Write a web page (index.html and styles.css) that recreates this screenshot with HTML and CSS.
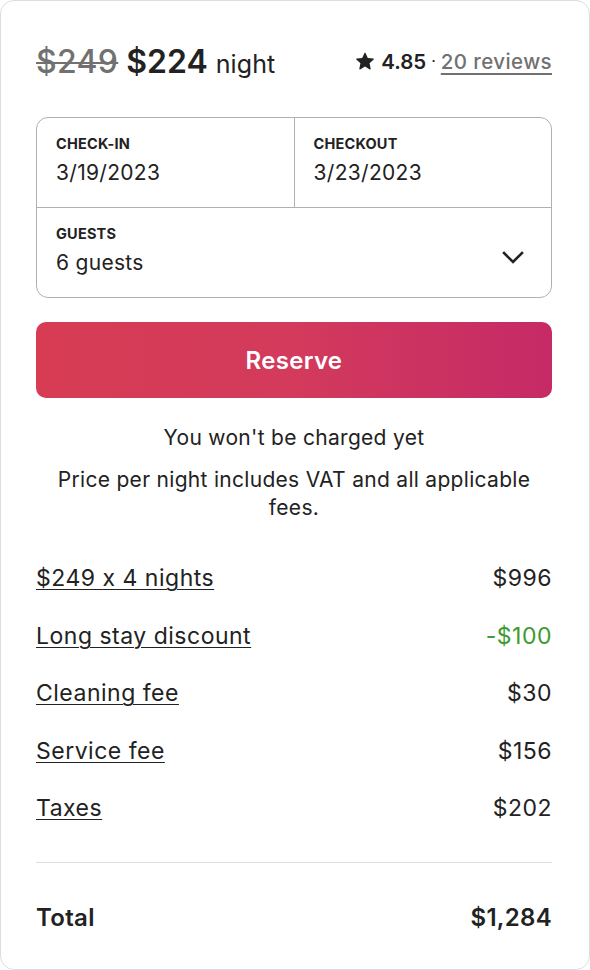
FILE: index.html
```html
<!DOCTYPE html>
<html lang="en">
<head>
<meta charset="utf-8">
<title>Reserve</title>
<link rel="stylesheet" href="styles.css">
</head>
<body>
<div class="card">
  <div class="header">
    <div class="price">
      <span class="old">$249</span>
      <span class="now">$224</span>
      <span class="unit">night</span>
    </div>
    <div class="rating">
      <svg class="star" viewBox="0 0 32 32" width="18" height="18"><path d="M15.1 1.58l-4.13 8.88-9.86 1.27a1 1 0 0 0-.54 1.74l7.3 6.570-1.97 9.85a1 1 0 0 0 1.48 1.06l8.62-5 8.63 5a1 1 0 0 0 1.48-1.06l-1.97-9.85 7.3-6.57a1 1 0 0 0-.55-1.73l-9.86-1.28-4.12-8.88a1 1 0 0 0-1.82 0z" fill="#222"/></svg>
      <span class="score">4.85</span>
      <span class="dot">·</span>
      <span class="reviews">20 reviews</span>
    </div>
  </div>

  <div class="picker">
    <div class="dates">
      <div class="cell">
        <div class="label">CHECK-IN</div>
        <div class="value">3/19/2023</div>
      </div>
      <div class="cell cell-right">
        <div class="label">CHECKOUT</div>
        <div class="value">3/23/2023</div>
      </div>
    </div>
    <div class="guests">
      <div class="cell">
        <div class="label">GUESTS</div>
        <div class="value">6 guests</div>
      </div>
      <svg class="chevron" viewBox="0 0 22 13" width="22" height="13"><path d="M2 2l9 9 9-9" fill="none" stroke="#222" stroke-width="2.6" stroke-linecap="square"/></svg>
    </div>
  </div>

  <div class="reserve">Reserve</div>

  <p class="note">You won't be charged yet</p>
  <p class="note note-vat">Price per night includes VAT and all applicable fees.</p>

  <div class="lines">
    <div class="line"><span class="link">$249 x 4 nights</span><span>$996</span></div>
    <div class="line"><span class="link">Long stay discount</span><span class="green">-$100</span></div>
    <div class="line"><span class="link">Cleaning fee</span><span>$30</span></div>
    <div class="line"><span class="link">Service fee</span><span>$156</span></div>
    <div class="line"><span class="link">Taxes</span><span>$202</span></div>
  </div>

  <div class="total"><span>Total</span><span>$1,284</span></div>
</div>
</body>
</html>
```

FILE: styles.css
```css
* { box-sizing: border-box; }
html, body { margin: 0; padding: 0; background: #fff; }
body {
  font-family: Inter, "Noto Sans", "Liberation Sans", sans-serif;
  font-feature-settings: "calt" 0;
  color: #222;
}
.card {
  width: 590px;
  height: 970px;
  border: 1px solid #dddddd;
  border-radius: 14px;
  padding: 36px 37px 0 35px;
}
.header {
  height: 48px;
  display: flex;
  align-items: center;
  justify-content: space-between;
  margin-bottom: 32px;
}
.price { display: flex; align-items: baseline; gap: 8px; }
.old {
  font-size: 32px;
  color: #717171;
  text-decoration: line-through;
  text-decoration-thickness: 2px;
  font-weight: 500;
  letter-spacing: 0.3px;
}
.now { font-size: 32px; font-weight: 600; letter-spacing: 0; }
.unit { font-size: 25px; font-weight: 400; letter-spacing: 0.1px; }
.rating { display: flex; align-items: center; gap: 5px; font-size: 20.5px; }
.star { margin-right: 2px; }
.score { font-weight: 600; }
.dot { font-size: 16px; }
.reviews {
  color: #717171;
  font-weight: 500;
  letter-spacing: 0.4px;
  text-decoration: underline;
  text-underline-offset: 4px;
  text-decoration-thickness: 2px;
}
.picker {
  border: 1px solid #b0b0b0;
  border-radius: 12px;
  height: 181px;
}
.dates { display: flex; height: 90px; border-bottom: 1px solid #b0b0b0; }
.dates .cell { flex: 1; }
.cell { padding: 16px 19px 0 19px; }
.cell-right { border-left: 1px solid #b0b0b0; }
.label { font-size: 14.5px; font-weight: 700; line-height: 20px; letter-spacing: 0.2px; }
.value { font-size: 21px; line-height: 28px; margin-top: 5px; letter-spacing: 0.3px; }
.guests { display: flex; align-items: center; justify-content: space-between; height: 89px; padding-right: 27px; }
.guests .cell { align-self: flex-start; }
.chevron { margin-top: 10px; }
.reserve {
  margin-top: 24px;
  height: 76px;
  border-radius: 10px;
  background: linear-gradient(90deg, #d73c53 0%, #d33a5c 50%, #c52a66 100%);
  color: #fff;
  font-size: 24px;
  font-weight: 600;
  letter-spacing: 0.3px;
  display: flex;
  align-items: center;
  justify-content: center;
}
.note {
  margin: 26px 0 0;
  text-align: center;
  font-size: 21px;
  line-height: 28px;
  letter-spacing: 0.3px;
}
.note-vat { margin-top: 14px; padding: 0 18px; }
.lines { margin-top: 42px; display: flex; flex-direction: column; gap: 29.5px; }
.line {
  display: flex;
  justify-content: space-between;
  font-size: 23px;
  line-height: 28px;
  letter-spacing: 0.5px;
}
.link { text-decoration: underline; text-underline-offset: 3px; text-decoration-thickness: 1px; }
.green { color: #3c9a2f; }
.total {
  margin-top: 40px;
  border-top: 1px solid #dddddd;
  padding-top: 41px;
  display: flex;
  justify-content: space-between;
  font-size: 24px;
  line-height: 28px;
  font-weight: 600;
  letter-spacing: 0.3px;
}
```
